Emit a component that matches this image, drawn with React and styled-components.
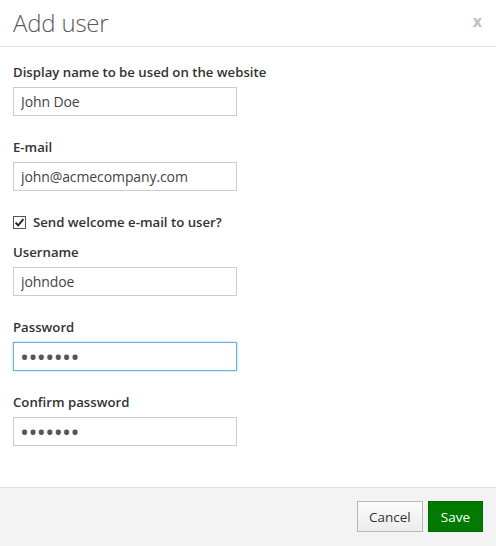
import React from 'react';
import styled, { createGlobalStyle } from 'styled-components';

const GlobalStyle = createGlobalStyle`
    html, body {
        margin: 0;
        padding: 0;
        background: #ffffff;
    }
    body {
        font-family: "Open Sans", "Noto Sans", "Liberation Sans", sans-serif;
        color: #333333;
    }
`;

const fields = [
    { label: 'Display name to be used on the website', value: 'John Doe' },
    { label: 'E-mail', value: 'john@acmecompany.com' },
];

const accountFields = [
    { label: 'Username', value: 'johndoe' },
    { label: 'Password', value: '1234567', type: 'password', focused: true },
    { label: 'Confirm password', value: '1234567', type: 'password' },
];

const App = () => {
    return (
        <>
            <GlobalStyle />
            <Modal>
                <Header>
                    <Title>Add user</Title>
                    <CloseButton>x</CloseButton>
                </Header>

                <Body>
                    {fields.map(f => (
                        <Group key={f.label}>
                            <Label>{f.label}</Label>
                            <Input type="text" defaultValue={f.value} />
                        </Group>
                    ))}

                    <CheckRow>
                        <CheckBox>
                            <svg width="11" height="11" viewBox="0 0 11 11">
                                <path d="M1.6 5.6 L4.2 8.3 L9.4 2.2" fill="none" stroke="#222" strokeWidth="1.9" />
                            </svg>
                        </CheckBox>
                        <CheckLabel>Send welcome e-mail to user?</CheckLabel>
                    </CheckRow>

                    {accountFields.map(f => (
                        <Group key={f.label}>
                            <Label>{f.label}</Label>
                            <Input
                                type={f.type || 'text'}
                                defaultValue={f.value}
                                $focused={f.focused}
                                $secret={f.type === 'password'}
                                autoFocus={f.focused}
                            />
                        </Group>
                    ))}
                </Body>

                <Footer>
                    <Button>Cancel</Button>
                    <Button $primary>Save</Button>
                </Footer>
            </Modal>
        </>
    );
};

const Modal = styled.div`
    width: 496px;
    height: 546px;
    display: flex;
    flex-direction: column;
    background: #ffffff;
    overflow: hidden;
`;

const Header = styled.div`
    height: 46px;
    display: flex;
    align-items: center;
    justify-content: space-between;
    padding: 0 13px 0 13px;
    border-bottom: 1px solid #e5e5e5;
    box-sizing: content-box;
`;

const Title = styled.div`
    font-size: 24px;
    font-weight: 300;
    color: #5a5a5a;
    letter-spacing: -0.2px;
    margin-top: -1px;
`;

const CloseButton = styled.div`
    font-size: 16px;
    font-weight: 700;
    color: #c0c0c0;
    margin-right: 1px;
    margin-top: -5px;
`;

const Body = styled.div`
    flex: 1;
    padding: 16px 13px 0 13px;
`;

const Group = styled.div`
    margin-bottom: 22px;
`;

const Label = styled.div`
    font-size: 13.2px;
    font-weight: 600;
    line-height: 18px;
    color: #333333;
    margin-bottom: 6px;
`;

const Input = styled.input`
    display: block;
    box-sizing: border-box;
    width: 224px;
    height: 29px;
    margin: 0;
    padding: 0 ${props => props.$secret ? '6px' : '7px'};
    font-family: "Open Sans", "Noto Sans", sans-serif;
    font-size: ${props => props.$secret ? '24px' : '14px'};
    letter-spacing: ${props => props.$secret ? '-0.6px' : '-0.1px'};
    color: ${props => props.$secret ? '#555555' : '#444444'};
    background: #ffffff;
    border: 1px solid ${props => props.$focused ? '#66afe9' : '#cccccc'};
    box-shadow: ${props => props.$focused ? '0 0 2px rgba(102, 175, 233, 0.6)' : 'none'};
    border-radius: 0;
    outline: none;
    caret-color: #000000;

    &:focus {
        border-color: #66afe9;
        box-shadow: 0 0 2px rgba(102, 175, 233, 0.6);
    }
`;

const CheckRow = styled.div`
    display: flex;
    align-items: center;
    height: 18px;
    margin-bottom: 12px;
`;

const CheckBox = styled.div`
    width: 13px;
    height: 13px;
    box-sizing: border-box;
    border: 1px solid #555555;
    background: #ffffff;
    display: flex;
    align-items: center;
    justify-content: center;
    margin-right: 7px;
`;

const CheckLabel = styled.div`
    font-size: 13.2px;
    font-weight: 600;
    color: #333333;
`;

const Footer = styled.div`
    height: 59px;
    background: #f3f3f3;
    border-top: 1px solid #e0e0e0;
    display: flex;
    justify-content: flex-end;
    align-items: flex-start;
    gap: 5px;
    padding: 13px 13px 0 0;
    box-sizing: border-box;
`;

const Button = styled.button`
    height: 31px;
    padding: 0 ${props => props.$primary ? '12px' : '11px'};
    font-family: "Open Sans", "Noto Sans", sans-serif;
    font-size: 13.5px;
    color: ${props => props.$primary ? '#ffffff' : '#333333'};
    background: ${props => props.$primary ? '#007a00' : 'linear-gradient(#fbfbfb, #ececec)'};
    border: 1px solid ${props => props.$primary ? '#006a00' : '#b8b8b8'};
    border-radius: 0;
    cursor: pointer;
`;

export default App;
